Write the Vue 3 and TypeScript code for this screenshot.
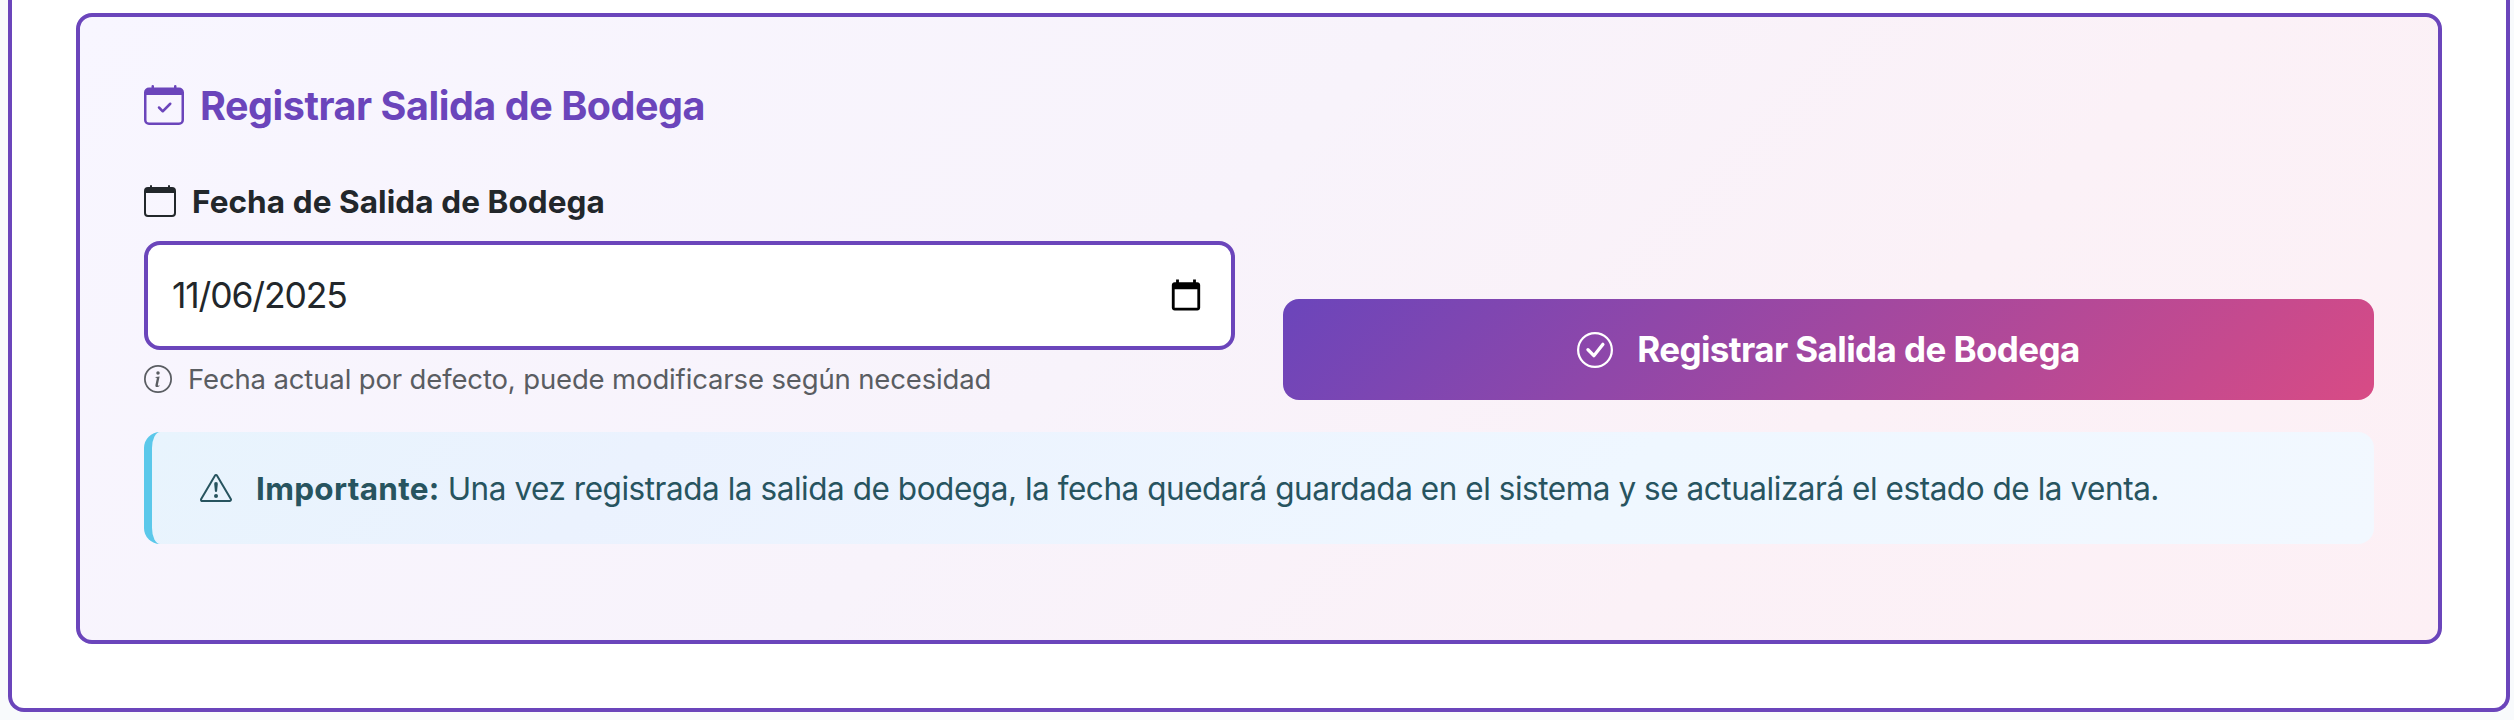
<script setup lang="ts">
import { ref } from 'vue'

const exitDate = ref<string>('11/06/2025')
</script>

<template>
  <div class="page">
    <section class="card">
      <div class="panel">
        <h2 class="title">
          <svg class="icon icon-title" viewBox="0 0 16 16">
            <path d="M10.854 7.146a.5.5 0 0 1 0 .708l-3 3a.5.5 0 0 1-.708 0l-1.5-1.5a.5.5 0 1 1 .708-.708L7.5 9.793l2.646-2.647a.5.5 0 0 1 .708 0" />
            <path d="M3.5 0a.5.5 0 0 1 .5.5V1h8V.5a.5.5 0 0 1 1 0V1h1a2 2 0 0 1 2 2v11a2 2 0 0 1-2 2H2a2 2 0 0 1-2-2V3a2 2 0 0 1 2-2h1V.5a.5.5 0 0 1 .5-.5M1 4v10a1 1 0 0 0 1 1h12a1 1 0 0 0 1-1V4z" />
          </svg>
          <span>Registrar Salida de Bodega</span>
        </h2>

        <div class="row">
          <div class="field">
            <label class="label" for="exit-date">
              <svg class="icon icon-label" viewBox="0 0 16 16">
                <path d="M3.5 0a.5.5 0 0 1 .5.5V1h8V.5a.5.5 0 0 1 1 0V1h1a2 2 0 0 1 2 2v11a2 2 0 0 1-2 2H2a2 2 0 0 1-2-2V3a2 2 0 0 1 2-2h1V.5a.5.5 0 0 1 .5-.5M1 4v10a1 1 0 0 0 1 1h12a1 1 0 0 0 1-1V4z" />
              </svg>
              <span>Fecha de Salida de Bodega</span>
            </label>
            <div class="control">
              <input id="exit-date" v-model="exitDate" class="date" type="text" />
              <svg class="icon picker" viewBox="0 0 24 24">
                <path d="M20 3h-1V1h-2v2H7V1H5v2H4c-1.1 0-2 .9-2 2v16c0 1.1.9 2 2 2h16c1.1 0 2-.9 2-2V5c0-1.1-.9-2-2-2zm0 18H4V8h16v13z" />
              </svg>
            </div>
            <div class="hint">
              <svg class="icon icon-hint" viewBox="0 0 16 16">
                <path d="M8 15A7 7 0 1 1 8 1a7 7 0 0 1 0 14m0 1A8 8 0 1 0 8 0a8 8 0 0 0 0 16" />
                <path d="m8.93 6.588-2.29.287-.082.38.45.083c.294.07.352.176.288.469l-.738 3.468c-.194.897.105 1.319.808 1.319.545 0 1.178-.252 1.465-.598l.088-.416c-.2.176-.492.246-.686.246-.275 0-.375-.193-.304-.533zM9 4.5a1 1 0 1 1-2 0 1 1 0 0 1 2 0" />
              </svg>
              <span>Fecha actual por defecto, puede modificarse según necesidad</span>
            </div>
          </div>

          <button class="submit" type="button">
            <svg class="icon icon-submit" viewBox="0 0 16 16">
              <path d="M8 15A7 7 0 1 1 8 1a7 7 0 0 1 0 14m0 1A8 8 0 1 0 8 0a8 8 0 0 0 0 16" />
              <path d="m10.97 4.97-.02.022-3.473 4.425-2.093-2.094a.75.75 0 0 0-1.06 1.06L6.97 11.03a.75.75 0 0 0 1.079-.02l3.992-4.99a.75.75 0 0 0-1.071-1.05" />
            </svg>
            <span>Registrar Salida de Bodega</span>
          </button>
        </div>

        <div class="notice">
          <svg class="icon icon-notice" viewBox="0 0 16 16">
            <path d="M7.938 2.016A.13.13 0 0 1 8.002 2a.13.13 0 0 1 .063.016.15.15 0 0 1 .054.057l6.857 11.667c.036.06.035.124.002.183a.2.2 0 0 1-.054.06.1.1 0 0 1-.066.017H1.146a.1.1 0 0 1-.066-.017.2.2 0 0 1-.054-.06.18.18 0 0 1 .002-.183L7.884 2.073a.15.15 0 0 1 .054-.057m1.044-.45a1.13 1.13 0 0 0-1.96 0L.165 13.233c-.457.778.091 1.767.98 1.767h13.713c.889 0 1.438-.99.98-1.767z" />
            <path d="M7.002 12a1 1 0 1 1 2 0 1 1 0 0 1-2 0M7.1 5.995a.905.905 0 1 1 1.8 0l-.35 3.507a.552.552 0 0 1-1.1 0z" />
          </svg>
          <strong class="notice-lead">Importante:</strong>
          <span class="notice-text">Una vez registrada la salida de bodega, la fecha quedará guardada en el sistema y se actualizará el estado de la venta.</span>
        </div>
      </div>
    </section>
  </div>
</template>

<style>
body {
  margin: 0;
}
</style>

<style scoped>
.page,
.page * {
  box-sizing: border-box;
}

.page {
  height: 720px;
  padding: 0 4px 8px 8px;
  overflow: hidden;
  background: #f8fafc;
  color: #22272b;
  font-family: Inter, 'Liberation Sans', sans-serif;
}

.card {
  height: 712px;
  padding: 13px 64px 64px;
  border: 4px solid #6b45bb;
  border-top: 0;
  border-radius: 0 0 16px 16px;
  background: #fff;
}

.panel {
  height: 631px;
  padding: 64px;
  border: 4px solid #6b45bb;
  border-radius: 16px;
  background: linear-gradient(135deg, #f8f6ff 0%, #f8f3fb 45%, #fbf1f7 72%, #fdf0f5 100%);
}

.icon {
  display: block;
  flex: none;
  fill: currentColor;
}

.title {
  display: flex;
  align-items: center;
  height: 48px;
  margin: 0 0 48px;
  color: #6b45bb;
  font-size: 39.5px;
  font-weight: 700;
  line-height: 48px;
  letter-spacing: -0.46px;
  white-space: nowrap;
}

.title span {
  padding-top: 2px;
}

.icon-title {
  width: 40px;
  height: 40px;
  margin-right: 16px;
}

.row {
  display: grid;
  grid-template-columns: 1fr 1fr;
  gap: 48px;
  align-items: end;
}

.label {
  display: flex;
  align-items: center;
  height: 48px;
  margin-bottom: 16px;
  font-size: 31.5px;
  font-weight: 700;
  letter-spacing: 0.08px;
  white-space: nowrap;
}

.icon-label {
  width: 32px;
  height: 32px;
  margin-right: 16px;
}

.control {
  display: flex;
  align-items: center;
  height: 109px;
  padding: 0 28px 0 24px;
  border: 4px solid #6b45bb;
  border-radius: 16px;
  background: #fff;
}

.date {
  flex: 1;
  min-width: 0;
  padding: 0;
  border: 0;
  outline: 0;
  background: transparent;
  color: #22272b;
  font-family: inherit;
  font-size: 35.5px;
  line-height: 54px;
  letter-spacing: -1.15px;
}

.picker {
  width: 34px;
  height: 34px;
  margin-bottom: 2px;
  color: #000;
}

.hint {
  display: flex;
  align-items: center;
  height: 42px;
  margin-top: 8px;
  color: #5a5d62;
  font-size: 27.5px;
  letter-spacing: -0.14px;
  white-space: nowrap;
}

.icon-hint {
  width: 28px;
  height: 28px;
  margin-right: 16px;
}

.submit {
  display: flex;
  align-items: center;
  justify-content: center;
  height: 101px;
  padding: 0;
  border: 0;
  border-radius: 16px;
  background: linear-gradient(135deg, #6b45bb 0%, #d84b85 100%);
  color: #fff;
  font-family: inherit;
  font-size: 35px;
  font-weight: 700;
  letter-spacing: -0.6px;
  white-space: nowrap;
}

.submit span {
  padding-bottom: 2px;
}

.icon-submit {
  width: 36px;
  height: 36px;
  margin-right: 24px;
}

.notice {
  display: flex;
  align-items: center;
  height: 112px;
  margin-top: 32px;
  padding-left: 48px;
  border-left: 8px solid #5bc8ea;
  border-radius: 16px;
  background: linear-gradient(135deg, #e8f4fd 0%, #ebf2fe 22%, #eff7ff 65%, #f2f8ff 100%);
  color: #27545f;
  font-size: 31.5px;
  letter-spacing: -0.46px;
  white-space: nowrap;
}

.icon-notice {
  width: 32px;
  height: 32px;
  margin-right: 24px;
}

.notice-lead {
  letter-spacing: 0.3px;
}

.notice-text {
  margin-left: 8px;
}
</style>
